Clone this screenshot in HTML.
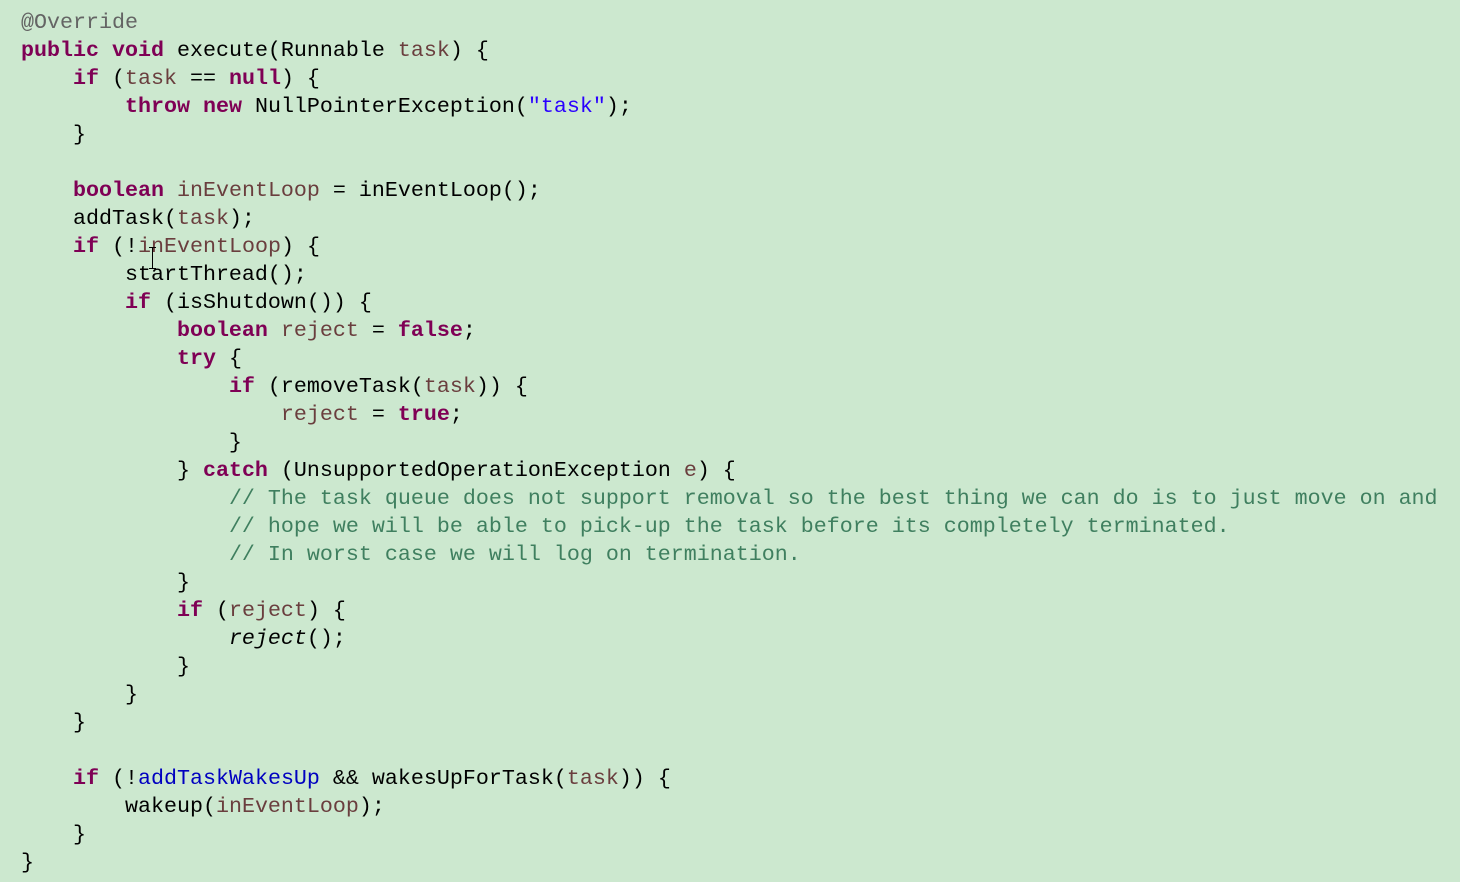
<!DOCTYPE html><html><head><style>
body{margin:0;background:#cce8cf;width:1460px;height:882px;overflow:hidden;position:relative}
pre{margin:0;padding:9px 0 0 21px;font-family:"Liberation Mono",monospace;font-size:21.67px;line-height:28px;color:#000}
.k{color:#7f0055;font-weight:bold}.p{color:#6a3e3e}.c{color:#3f7f5f}.s{color:#2a00ff}.f{color:#0000c0}.a{color:#646464}
.cur{position:absolute;left:152px;top:247px;width:1px;height:22px;background:#000}
.cur:before,.cur:after{content:"";position:absolute;left:-3px;width:7px;height:1px;background:#000}
.cur:before{top:0}.cur:after{bottom:0}
</style></head><body><pre><span class="a">@Override</span>
<span class="k">public</span> <span class="k">void</span> execute(Runnable <span class="p">task</span>) {
    <span class="k">if</span> (<span class="p">task</span> == <span class="k">null</span>) {
        <span class="k">throw</span> <span class="k">new</span> NullPointerException(<span class="s">"task"</span>);
    }

    <span class="k">boolean</span> <span class="p">inEventLoop</span> = inEventLoop();
    addTask(<span class="p">task</span>);
    <span class="k">if</span> (!<span class="p">inEventLoop</span>) {
        startThread();
        <span class="k">if</span> (isShutdown()) {
            <span class="k">boolean</span> <span class="p">reject</span> = <span class="k">false</span>;
            <span class="k">try</span> {
                <span class="k">if</span> (removeTask(<span class="p">task</span>)) {
                    <span class="p">reject</span> = <span class="k">true</span>;
                }
            } <span class="k">catch</span> (UnsupportedOperationException <span class="p">e</span>) {
                <span class="c">// The task queue does not support removal so the best thing we can do is to just move on and</span>
                <span class="c">// hope we will be able to pick-up the task before its completely terminated.</span>
                <span class="c">// In worst case we will log on termination.</span>
            }
            <span class="k">if</span> (<span class="p">reject</span>) {
                <i>reject</i>();
            }
        }
    }

    <span class="k">if</span> (!<span class="f">addTaskWakesUp</span> &amp;&amp; wakesUpForTask(<span class="p">task</span>)) {
        wakeup(<span class="p">inEventLoop</span>);
    }
}</pre><div class="cur"></div></body></html>
